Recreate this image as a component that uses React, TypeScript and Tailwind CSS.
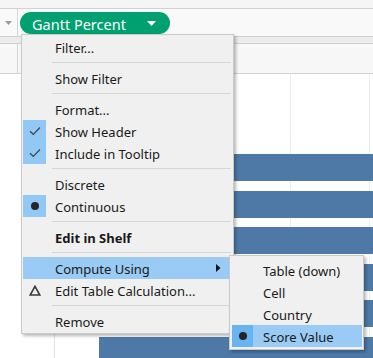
import React from 'react'

const font = { fontFamily: '"Noto Sans", "Open Sans", sans-serif' }

function Check() {
  return (
    <svg width="12" height="10" viewBox="0 0 12 10" fill="none">
      <path d="M1 5.2 L4.3 8.3 L11 1.5" stroke="#444" strokeWidth="1.2" />
    </svg>
  )
}

function Dot() {
  return <span className="block w-[8px] h-[8px] rounded-full bg-[#262626]" />
}

function Delta() {
  return (
    <svg width="12" height="11" viewBox="0 0 12 11" fill="none">
      <path d="M6 1.3 L10.8 10 L1.2 10 Z" stroke="#3a3a3a" strokeWidth="1.6" strokeLinejoin="miter" />
    </svg>
  )
}

type Item =
  | { sep: true }
  | { sep?: false; label: string; icon?: 'check' | 'dot' | 'delta'; bold?: boolean; active?: boolean; sub?: boolean }

const items: Item[] = [
  { label: 'Filter...' },
  { sep: true },
  { label: 'Show Filter' },
  { sep: true },
  { label: 'Format...' },
  { label: 'Show Header', icon: 'check' },
  { label: 'Include in Tooltip', icon: 'check' },
  { sep: true },
  { label: 'Discrete' },
  { label: 'Continuous', icon: 'dot' },
  { sep: true },
  { label: 'Edit in Shelf', bold: true },
  { sep: true },
  { label: 'Compute Using', active: true, sub: true },
  { label: 'Edit Table Calculation...', icon: 'delta' },
  { sep: true },
  { label: 'Remove' },
]

const subItems = ['Table (down)', 'Cell', 'Country', 'Score Value']

function ContextMenu() {
  return (
    <div className="absolute left-[21px] top-[34px] w-[213px] bg-[#f0f0f0] border border-[#cacaca] pt-px pb-px pl-px shadow-[2px_2px_3px_rgba(0,0,0,0.28)]">
      {items.map((it, i) =>
        it.sep ? (
          <div key={i} className="h-[9px] flex items-center pl-[29px] pr-[2px]">
            <div className="h-px w-full bg-[#d6d6d6]" />
          </div>
        ) : (
          <div
            key={i}
            className={`h-[22px] flex items-center mr-[3px] ${it.active ? 'bg-[#99cbf5]' : ''}`}
          >
            <div
              className={`w-[23px] h-[22px] flex items-center justify-center ${
                it.icon === 'check' || it.icon === 'dot' ? 'bg-[#91c8f6]' : ''
              }`}
            >
              {it.icon === 'check' && <Check />}
              {it.icon === 'dot' && <Dot />}
              {it.icon === 'delta' && <Delta />}
            </div>
            <span
              className={`ml-[9px] mt-[3px] text-[13px] leading-none text-[#1a1a1a] flex-1 ${it.bold ? 'font-bold' : ''}`}
            >
              {it.label}
            </span>
            {it.sub && (
              <svg width="5" height="8" viewBox="0 0 5 8" className="mr-[9px]">
                <path d="M0 0 L4.5 4 L0 8 Z" fill="#111" />
              </svg>
            )}
          </div>
        )
      )}
    </div>
  )
}

function SubMenu() {
  return (
    <div className="absolute left-[229px] top-[255px] w-[135px] h-[95px] bg-[#f0f0f0] border border-[#cacaca] pt-[3px] pl-[2px] pr-[1px] shadow-[2px_2px_3px_rgba(0,0,0,0.28)]">
      {subItems.map((s, i) => {
        const on = i === subItems.length - 1
        return (
          <div key={s} className={`h-[22px] flex items-center ${on ? 'bg-[#99cbf5]' : ''}`}>
            <div className={`w-[21px] h-[22px] flex items-center justify-center ${on ? 'bg-[#68b4f1]' : ''}`}>
              {on && <Dot />}
            </div>
            <span className="ml-[10px] mt-[3px] text-[13px] leading-none text-[#1a1a1a]">{s}</span>
          </div>
        )
      })}
    </div>
  )
}

export default function App() {
  const bars = [0, 1, 2, 3, 4, 5]
  return (
    <div className="relative w-[373px] h-[358px] overflow-hidden bg-white" style={font}>
      {/* top strip */}
      <div className="h-[8px] bg-[#f5f5f5]" />
      <div className="h-px bg-[#d2d2d2]" />
      {/* shelf row */}
      <div className="h-[27px] flex bg-[#f9f9f9]">
        <div className="w-[18px] border-r border-[#d6d6d6] flex items-center justify-center">
          <svg width="7" height="4" viewBox="0 0 7 4">
            <path d="M0 0 L7 0 L3.5 4 Z" fill="#9a9a9a" />
          </svg>
        </div>
        <div className="pl-[2px] pt-[3px]">
          <div className="w-[150px] h-[22px] rounded-full bg-[#00a070] flex items-center pl-[12px]">
            <span className="text-white text-[14.5px] leading-none mt-[2px] flex-1">Gantt Percent</span>
            <svg width="9" height="5" viewBox="0 0 9 5" className="mr-[14px]">
              <path d="M0 0 L9 0 L4.5 5 Z" fill="#fff" />
            </svg>
          </div>
        </div>
      </div>
      <div className="h-px bg-[#cfcfcf]" />
      <div className="h-[6px] bg-[#ececec]" />
      <div className="h-px bg-[#d0d0d0]" />
      {/* column header band */}
      <div className="h-[29px] flex bg-[#f7f7f7]">
        <div className="w-[18px] border-r border-[#d6d6d6]" />
      </div>
      <div className="h-px bg-[#d2d2d2]" />
      {/* chart area */}
      <div className="relative flex h-[285px]">
        <div className="w-[55px] border-r border-[#e4e4e4]" />
        <div className="w-[44px]" />
        <div className="flex-1 relative">
          <div className="absolute left-[191px] top-0 bottom-0 w-px bg-[#ececec]" />
          <div className="absolute left-[270px] top-0 bottom-0 w-px bg-[#ececec]" />
          <div className="relative flex flex-col gap-[9.5px] pt-[80px]">
            {bars.map((b) => (
              <div key={b} className="h-[27px] bg-[#4e79a7]" />
            ))}
          </div>
        </div>
      </div>
      <ContextMenu />
      <SubMenu />
    </div>
  )
}
